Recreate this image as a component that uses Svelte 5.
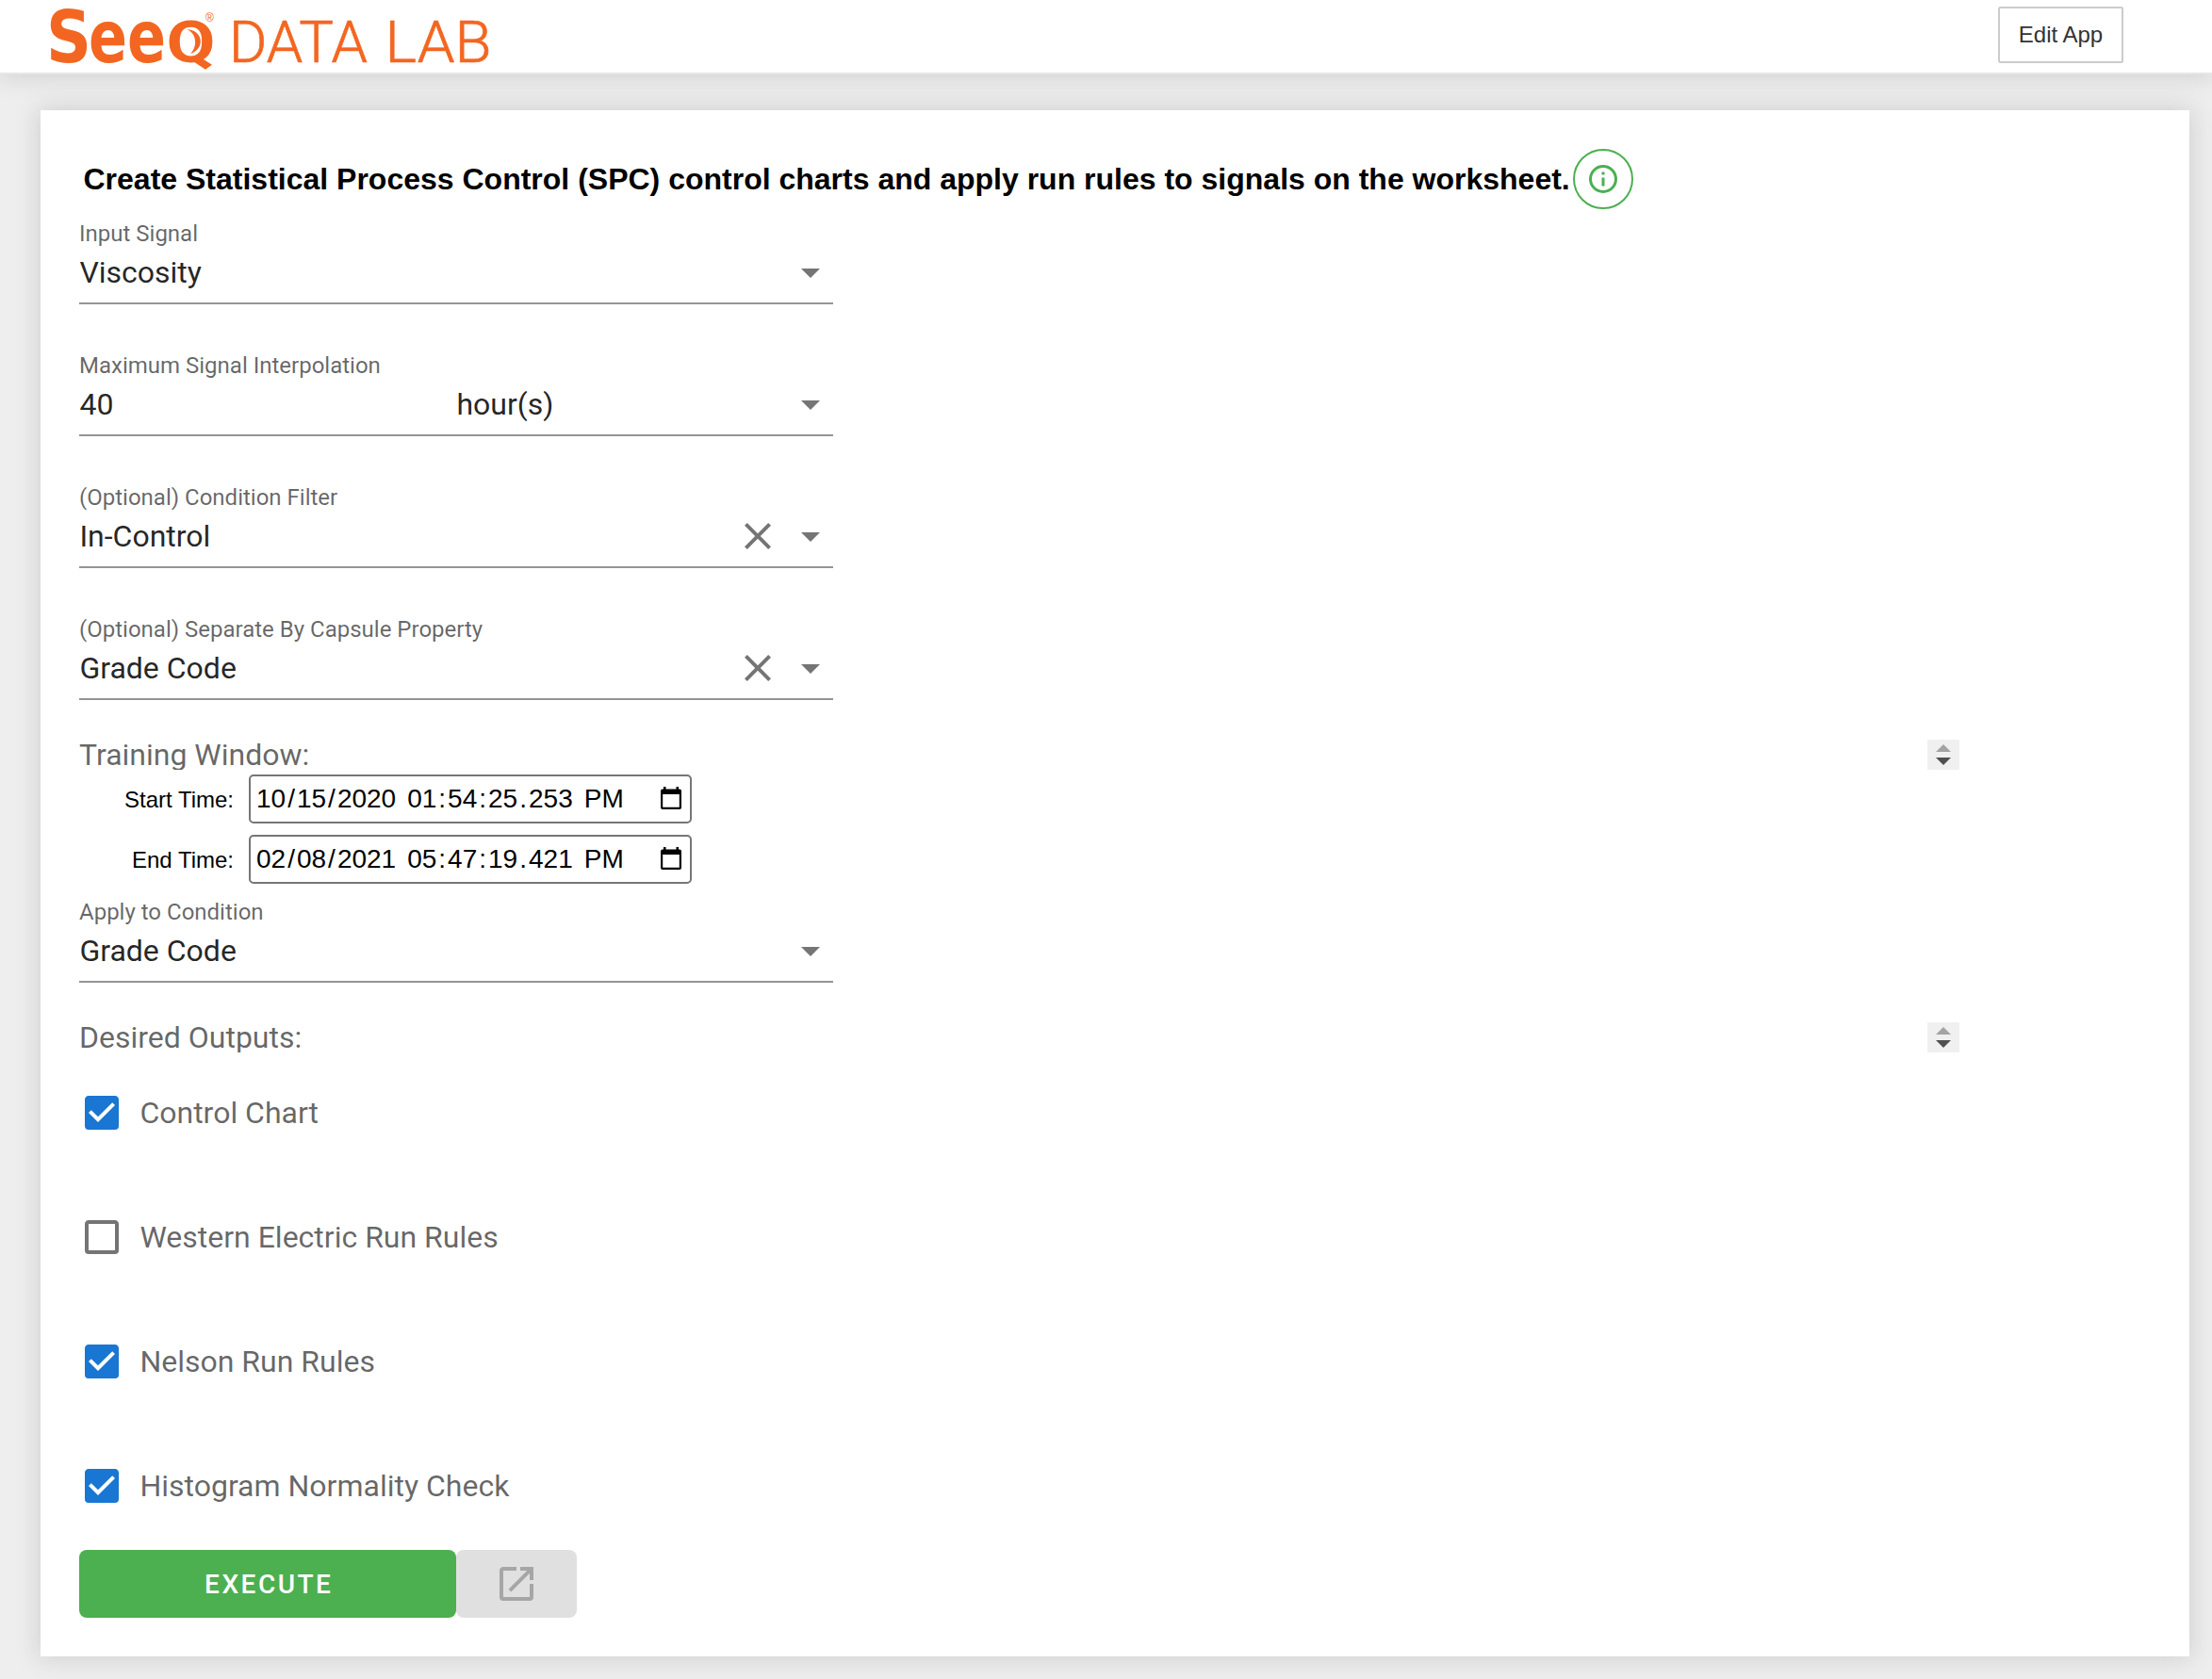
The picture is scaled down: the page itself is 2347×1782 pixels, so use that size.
<script>
  const fields = [
    { label: 'Input Signal', value: 'Viscosity' },
    { label: 'Maximum Signal Interpolation', value: '40', unit: 'hour(s)' },
    { label: '(Optional) Condition Filter', value: 'In-Control', clearable: true },
    { label: '(Optional) Separate By Capsule Property', value: 'Grade Code', clearable: true }
  ];
  const applyTo = { label: 'Apply to Condition', value: 'Grade Code' };

  const times = [
    { label: 'Start Time:', date: ['10', '15', '2020'], time: ['01', '54', '25', '253'], half: 'PM' },
    { label: 'End Time:', date: ['02', '08', '2021'], time: ['05', '47', '19', '421'], half: 'PM' }
  ];
  const timeSeparators = [':', ':', '.', ''];

  let outputs = $state([
    { label: 'Control Chart', checked: true },
    { label: 'Western Electric Run Rules', checked: false },
    { label: 'Nelson Run Rules', checked: true },
    { label: 'Histogram Normality Check', checked: true }
  ]);
</script>

{#snippet selectField(field)}
  <div class="field">
    <div class="field-label">{field.label}</div>
    <div class="field-row">
      <span class="value" class:half={field.unit}>{field.value}</span>
      {#if field.unit}<span class="value">{field.unit}</span>{/if}
      {#if field.clearable}
        <svg class="icon clear" viewBox="0 0 24 24"><path d="M19,6.41L17.59,5L12,10.59L6.41,5L5,6.41L10.59,12L5,17.59L6.41,19L12,13.41L17.59,19L19,17.59L13.41,12L19,6.41Z" /></svg>
      {/if}
      <svg class="icon" viewBox="0 0 24 24"><path d="M7,10L12,15L17,10H7Z" /></svg>
    </div>
  </div>
{/snippet}

{#snippet sectionTitle(text)}
  <div class="section">
    <span>{text}</span>
    <svg class="spinner" viewBox="0 0 34 32">
      <rect width="34" height="32" fill="#f0f0f0" />
      <path d="M9 13L17 5L25 13Z" fill="#a3a3a3" />
      <path d="M9 19L17 27L25 19Z" fill="#505050" />
    </svg>
  </div>
{/snippet}

<div class="page">
  <header>
    <svg class="logo" viewBox="0 0 480 76" width="480" height="76">
      <g class="brand">
        <text x="5" y="66" font-size="77" textLength="48" lengthAdjust="spacingAndGlyphs">S</text>
        <text x="50" y="66" font-size="77" textLength="82" lengthAdjust="spacingAndGlyphs">ee</text>
        <text class="round" x="132.500" y="66" font-size="62" textLength="52" lengthAdjust="spacingAndGlyphs">Q</text>
      </g>
      <path d="M154 31C172 32 174 52 158 57C165 51 166 36 154 31Z" />
      <text class="reg" x="174" y="23" font-size="12">®</text>
      <text class="product" x="199" y="66" font-size="62" textLength="147" lengthAdjust="spacingAndGlyphs">DATA</text>
      <text class="product" x="364.500" y="66" font-size="62" textLength="113" lengthAdjust="spacingAndGlyphs">LAB</text>
    </svg>
    <button class="edit">Edit App</button>
  </header>

  <main>
    <div class="title-row">
      <h1>Create Statistical Process Control (SPC) control charts and apply run rules to signals on the worksheet.</h1>
      <button class="info" aria-label="Information">
        <svg viewBox="0 0 24 24"><path d="M11,9H13V7H11M12,20C7.59,20 4,16.41 4,12C4,7.59 7.59,4 12,4C16.41,4 20,7.59 20,12C20,16.41 16.41,20 12,20M12,2A10,10 0 0,0 2,12A10,10 0 0,0 12,22A10,10 0 0,0 22,12A10,10 0 0,0 12,2M11,17H13V11H11V17Z" /></svg>
      </button>
    </div>

    <div class="fields">
      {#each fields as field}
        {@render selectField(field)}
      {/each}
    </div>

    {@render sectionTitle('Training Window:')}

    <div class="times">
      {#each times as t}
        <span class="time-label">{t.label}</span>
        <div class="datetime">
          <span class="part">{#each t.date as d, i}<span class="seg">{d}</span>{i < 2 ? '/' : ''}{/each}</span>
          <span class="part">{#each t.time as d, i}<span class="seg">{d}</span>{timeSeparators[i]}{/each}</span>
          <span class="seg">{t.half}</span>
          <svg class="calendar" viewBox="0 0 22 24"><path fill-rule="evenodd" d="M3 0H5.5V2.5H16.5V0H19V2.5H20A2 2 0 0 1 22 4.500V22A2 2 0 0 1 20 24H2A2 2 0 0 1 0 22V4.500A2 2 0 0 1 2 2.500H3ZM2.200 8V21.800H19.800V8Z" /></svg>
        </div>
      {/each}
    </div>

    {@render selectField(applyTo)}

    <div class="outputs-title">{@render sectionTitle('Desired Outputs:')}</div>

    <div class="outputs">
      {#each outputs as output}
        <button class="check" role="checkbox" aria-checked={output.checked} onclick={() => (output.checked = !output.checked)}>
          <svg class:on={output.checked} viewBox="3 3 18 18">
            {#if output.checked}
              <path d="M10,17L5,12L6.41,10.58L10,14.17L17.59,6.58L19,8M19,3H5C3.89,3 3,3.89 3,5V19A2,2 0 0,0 5,21H19A2,2 0 0,0 21,19V5C21,3.89 20.1,3 19,3Z" />
            {:else}
              <path d="M19,3H5C3.89,3 3,3.89 3,5V19A2,2 0 0,0 5,21H19A2,2 0 0,0 21,19V5C21,3.89 20.1,3 19,3M19,5V19H5V5H19Z" />
            {/if}
          </svg>
          <span>{output.label}</span>
        </button>
      {/each}
    </div>

    <div class="actions">
      <button class="execute">EXECUTE</button>
      <button class="open" aria-label="Open" disabled>
        <svg viewBox="0 0 24 24"><path d="M14,3V5H17.59L7.76,14.83L9.17,16.24L19,6.41V10H21V3M19,19H5V5H12V3H5C3.89,3 3,3.9 3,5V19A2,2 0 0,0 5,21H19A2,2 0 0,0 21,19V12H19V19Z" /></svg>
      </button>
    </div>
  </main>
</div>

<style>
  :global(body) {
    background: #eee;
  }
  .page {
    box-sizing: border-box;
    height: 1782px;
    overflow: hidden;
    font-family: Roboto, 'Liberation Sans', sans-serif;
    color: rgba(0, 0, 0, 0.87);
  }
  button {
    margin: 0;
    padding: 0;
    border: 0;
    background: none;
    font: inherit;
    color: inherit;
  }
  svg {
    display: block;
    flex: none;
    fill: currentColor;
  }
  header {
    box-sizing: border-box;
    height: 79px;
    padding: 0 94px 0 44px;
    display: flex;
    justify-content: space-between;
    background: #fff;
    border-bottom: 2px solid #e7e7e7;
    box-shadow: 0 0 24px 2px rgba(87, 87, 87, 0.2);
  }
  .logo {
    color: #f36621;
    overflow: visible;
  }
  .brand {
    font-family: 'DejaVu Sans', sans-serif;
    font-weight: 700;
  }
  .round {
    font-family: Roboto, sans-serif;
  }
  .reg {
    font-family: 'Liberation Sans', sans-serif;
  }
  .product {
    font-family: Roboto, sans-serif;
    font-weight: 300;
    stroke: currentColor;
    stroke-width: 0.7px;
  }
  .edit {
    box-sizing: border-box;
    width: 133px;
    height: 60px;
    margin-top: 7px;
    border: 2px solid #ccc;
    border-radius: 2px;
    font: 24px 'Liberation Sans', Arial, sans-serif;
    color: #333;
  }
  main {
    box-sizing: border-box;
    width: 2280px;
    height: 1641px;
    margin: 38px 0 0 43px;
    padding: 41px;
    background: #fff;
    box-shadow: 0 0 24px 2px rgba(87, 87, 87, 0.2);
  }
  .title-row {
    display: flex;
    align-items: center;
    gap: 3px;
    height: 64px;
    padding-left: 4.5px;
  }
  h1 {
    margin: 0;
    font: 700 32px/64px 'Liberation Sans', Arial, sans-serif;
    color: #000;
    white-space: nowrap;
  }
  .info {
    box-sizing: border-box;
    display: grid;
    place-items: center;
    width: 64px;
    height: 64px;
    border: 2px solid #4caf50;
    border-radius: 50%;
    color: #4caf50;
  }
  .info svg {
    width: 36px;
    height: 36px;
  }
  .fields {
    display: flex;
    flex-direction: column;
    gap: 51px;
    padding: 12px 0 42px;
  }
  .field {
    box-sizing: border-box;
    width: 800px;
    height: 89px;
    border-bottom: 2px solid #949494;
  }
  .field-label {
    margin-bottom: 3px;
    font-size: 24px;
    line-height: 28px;
    color: rgba(0, 0, 0, 0.6);
  }
  .field-row {
    display: flex;
    align-items: center;
    padding-left: 0.4px;
    margin-right: -0.4px;
  }
  .value {
    flex: 1;
    font-size: 32px;
    line-height: 48px;
  }
  .value.half {
    flex: none;
    width: 400px;
  }
  .icon {
    width: 48px;
    height: 48px;
    color: #757575;
  }
  .clear {
    margin-right: 8px;
  }
  .section {
    display: flex;
    justify-content: space-between;
    width: 1995px;
    height: 32px;
    overflow: hidden;
    font-size: 32px;
    line-height: 32px;
    color: rgba(0, 0, 0, 0.6);
  }
  .spinner {
    width: 34px;
    height: 32px;
  }
  .times {
    display: grid;
    grid-template-columns: 164px 470px;
    grid-auto-rows: 52px;
    column-gap: 16px;
    row-gap: 12px;
    padding: 5px 0 16px;
    font-family: 'Liberation Sans', Arial, sans-serif;
    color: #000;
  }
  .time-label {
    font-size: 24px;
    line-height: 54px;
    text-align: right;
  }
  .datetime {
    box-sizing: border-box;
    display: flex;
    align-items: center;
    gap: 8px;
    padding: 0 9px 0 4px;
    border: 2px solid #767676;
    border-radius: 5px;
    font-size: 28px;
    line-height: 48px;
    white-space: nowrap;
  }
  .seg {
    padding: 0 2px;
  }
  .calendar {
    width: 22px;
    height: 24px;
    margin: 0 0 2px auto;
  }
  .outputs-title {
    padding: 42px 0 46px;
  }
  .outputs {
    display: flex;
    flex-direction: column;
    align-items: flex-start;
    gap: 96px;
    padding: 0 0 50px 6.4px;
  }
  .check {
    display: flex;
    align-items: center;
    gap: 22px;
    height: 36px;
    font-size: 32px;
    line-height: 36px;
    color: rgba(0, 0, 0, 0.6);
  }
  .check svg {
    width: 36px;
    height: 36px;
    color: #757575;
  }
  .check svg.on {
    color: #1976d2;
  }
  .actions {
    display: flex;
    height: 72px;
  }
  .execute {
    width: 400px;
    padding-left: 2.5px;
    border-radius: 8px;
    background: #4caf50;
    color: #fff;
    font-size: 28px;
    font-weight: 500;
    letter-spacing: 0.0892857em;
  }
  .open {
    display: grid;
    place-items: center;
    width: 128px;
    border-radius: 8px;
    background: #e0e0e0;
    color: #a6a6a6;
  }
  .open svg {
    width: 48px;
    height: 48px;
  }
</style>
